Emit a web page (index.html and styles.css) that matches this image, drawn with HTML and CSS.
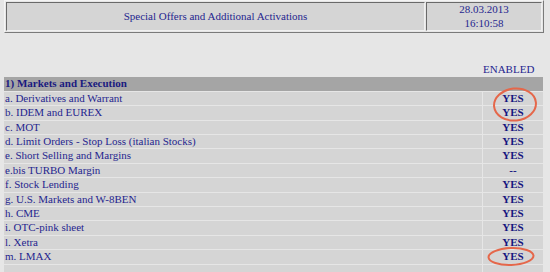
FILE: index.html
```html
<!DOCTYPE html>
<html lang="en">
<head>
    <meta charset="UTF-8">
    <title>Special Offers and Additional Activations</title>
    <link rel="stylesheet" href="styles.css">
</head>
<body>
    <table class="head-table">
        <tr>
            <td class="head-title">Special Offers and Additional Activations</td>
            <td class="head-date">28.03.2013<br>16:10:58</td>
        </tr>
    </table>

    <table class="offers">
        <tr class="col-head">
            <td></td>
            <td class="enabled-label">ENABLED</td>
        </tr>
        <tr class="section">
            <td colspan="2">1) Markets and Execution</td>
        </tr>
        <tr><td>a. Derivatives and Warrant</td><td class="state">YES</td></tr>
        <tr><td>b. IDEM and EUREX</td><td class="state">YES</td></tr>
        <tr><td>c. MOT</td><td class="state">YES</td></tr>
        <tr><td>d. Limit Orders - Stop Loss (italian Stocks)</td><td class="state">YES</td></tr>
        <tr><td>e. Short Selling and Margins</td><td class="state">YES</td></tr>
        <tr><td>e.bis TURBO Margin</td><td class="state">--</td></tr>
        <tr><td>f. Stock Lending</td><td class="state">YES</td></tr>
        <tr><td>g. U.S. Markets and W-8BEN</td><td class="state">YES</td></tr>
        <tr><td>h. CME</td><td class="state">YES</td></tr>
        <tr><td>i. OTC-pink sheet</td><td class="state">YES</td></tr>
        <tr><td>l. Xetra</td><td class="state">YES</td></tr>
        <tr><td>m. LMAX</td><td class="state">YES</td></tr>
        <tr><td>&nbsp;</td><td class="state"></td></tr>
    </table>

    <!-- hand-drawn marks around the enabled items -->
    <svg class="marks" width="550" height="272" viewBox="0 0 550 272">
        <ellipse cx="515" cy="104.5" rx="21" ry="16" transform="rotate(-6 515 104.5)" />
        <ellipse cx="511" cy="256.5" rx="22.5" ry="8.5" transform="rotate(-2 511 256.5)" />
    </svg>
</body>
</html>
```

FILE: styles.css
```css
html, body {
    margin: 0;
    padding: 0;
    background-color: #e6e6e6;
    font-family: "Liberation Serif", "Times New Roman", serif;
    font-size: 11px;
    color: #25258f;
    overflow: hidden;
}
body {
    position: relative;
    width: 550px;
    height: 272px;
}

/* top banner */
.head-table {
    margin-left: 4px;
    width: 540px;
    height: 33px;
    border: 1px solid;
    border-color: #f4f4f4 #7a7a7a #7a7a7a #f4f4f4;
    border-spacing: 1px;
    table-layout: fixed;
}
.head-table td {
    background-color: #d5d5d5;
    border: 1px solid;
    border-color: #6a6a6a #f0f0f0 #f0f0f0 #6a6a6a;
    padding: 0;
    line-height: 13.5px;
    text-align: center;
    vertical-align: middle;
}
.head-title {
    width: 417px;
}

/* list of services */
.offers {
    margin: 29px 0 0 3px;
    width: 541px;
    border-spacing: 1px;
    table-layout: fixed;
}
.offers td {
    height: 13.4px;
    line-height: 13.4px;
    padding: 0 0 0 1px;
    background-color: #d5d5d5;
    white-space: nowrap;
}
.offers td.state {
    width: 60px;
    padding: 0;
    text-align: center;
    font-weight: bold;
    color: #15157f;
}
.offers .col-head td {
    background-color: transparent;
}
.offers td.enabled-label {
    text-align: right;
    padding: 0 10px 0 0;
    width: 50px;
}
.offers .section td {
    background-color: #a5a5a5;
    font-weight: bold;
    color: #1a1a80;
}

.marks {
    position: absolute;
    top: 0;
    left: 0;
    pointer-events: none;
}
.marks ellipse {
    fill: none;
    stroke: #e5674a;
    stroke-width: 2;
}
```
